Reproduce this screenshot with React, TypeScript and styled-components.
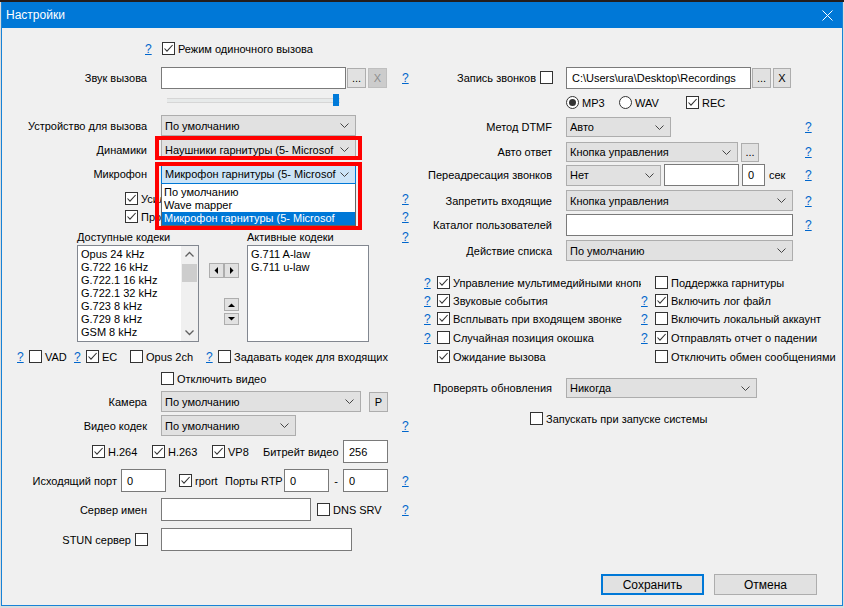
import React from "react";
import styled, { createGlobalStyle } from "styled-components";

const GlobalStyle = createGlobalStyle`
  html, body {
    margin: 0;
    padding: 0;
  }
  body {
    background: #dcdcdc;
    font-family: "Liberation Sans", Arial, sans-serif;
    font-size: 11px;
    color: #000;
  }
`;

const Screen = styled.div`
  width: 844px;
  height: 608px;
  box-sizing: border-box;
  padding: 2px 0 0 1px;
  background: linear-gradient(#231c1c 0 2px, #dcdcdc 2px);
  overflow: hidden;
`;

const Window = styled.div`
  width: 842px;
  height: 604px;
  box-sizing: border-box;
  border: 1px solid #1883d7;
  border-top: none;
  background: #f0f0f0;
  display: flex;
  flex-direction: column;
`;

const TitleBar = styled.div`
  height: 26px;
  flex-shrink: 0;
  background: #0078d7;
  display: flex;
  align-items: center;
  padding: 0 9px 0 4px;
  color: #fff;
  font-size: 12px;
`;

const CloseIcon = styled.svg`
  margin-left: auto;
  width: 11px;
  height: 11px;
`;

const Client = styled.div`
  flex: 1;
  display: flex;
  flex-direction: column;
`;

const Columns = styled.div`
  flex: 1;
  display: flex;
`;

const Row = styled.div<{ $mt: number; $h: number }>`
  display: flex;
  align-items: center;
  flex-shrink: 0;
  position: relative;
  height: ${(p) => p.$h}px;
  margin-top: ${(p) => p.$mt}px;
`;

const Col = styled.div<{ $w: number; $pr: number }>`
  width: ${(p) => p.$w}px;
  display: flex;
  flex-direction: column;

  ${Row} {
    padding-right: ${(p) => p.$pr}px;
  }
`;

const Lbl = styled.span<{ $w: number }>`
  width: ${(p) => p.$w}px;
  flex-shrink: 0;
  display: flex;
  justify-content: flex-end;
  align-items: center;
  gap: 4px;
  white-space: nowrap;
`;

const Cell = styled.span<{ $w?: number; $ml?: number; $center?: boolean; $clip?: boolean }>`
  display: flex;
  align-items: center;
  flex-shrink: 0;
  white-space: nowrap;
  width: ${(p) => (p.$w ? `${p.$w}px` : "auto")};
  margin-left: ${(p) => p.$ml ?? 0}px;
  justify-content: ${(p) => (p.$center ? "center" : "flex-start")};
  overflow: ${(p) => (p.$clip ? "hidden" : "visible")};
`;

const HelpLink = styled.span<{ $auto?: boolean }>`
  color: #0066cc;
  text-decoration: underline;
  font-size: 12px;
  width: 7px;
  cursor: pointer;
  margin-left: ${(p) => (p.$auto ? "auto" : "0")};
`;

const Box = styled.span`
  width: 13px;
  height: 13px;
  box-sizing: border-box;
  flex-shrink: 0;
  border: 1px solid #333;
  background: #fff;
  display: inline-flex;
  align-items: center;
  justify-content: center;
`;

const CheckWrap = styled.span<{ $ml?: number }>`
  display: inline-flex;
  align-items: center;
  gap: 3px;
  white-space: nowrap;
  margin-left: ${(p) => p.$ml ?? 0}px;
`;

const RadioDot = styled.span<{ $on?: boolean }>`
  width: 13px;
  height: 13px;
  box-sizing: border-box;
  border-radius: 50%;
  border: 1px solid #333;
  background: #fff;
  display: inline-flex;
  align-items: center;
  justify-content: center;

  &::after {
    content: "";
    width: 7px;
    height: 7px;
    border-radius: 50%;
    background: ${(p) => (p.$on ? "#333" : "transparent")};
  }
`;

const ComboBox = styled.div<{ $w: number; $h?: number; $focus?: boolean }>`
  width: ${(p) => p.$w}px;
  height: ${(p) => p.$h ?? 21}px;
  flex-shrink: 0;
  box-sizing: border-box;
  border: 1px solid ${(p) => (p.$focus ? "#0078d7" : "#adadad")};
  background: ${(p) => (p.$focus ? "#cce4f7" : "#e1e1e1")};
  display: flex;
  align-items: center;
  padding: 0 6px 0 3px;
  position: relative;
`;

const ComboText = styled.span`
  flex: 1;
  overflow: hidden;
  white-space: nowrap;
`;

const Edit = styled.div<{ $w: number; $h?: number; $ml?: number }>`
  width: ${(p) => p.$w}px;
  height: ${(p) => p.$h ?? 23}px;
  margin-left: ${(p) => p.$ml ?? 0}px;
  flex-shrink: 0;
  box-sizing: border-box;
  border: 1px solid #7a7a7a;
  background: #fff;
  display: flex;
  align-items: center;
  padding-left: 5px;
  white-space: nowrap;
  overflow: hidden;
`;

const Btn = styled.div<{ $w: number; $h?: number; $ml?: number; $disabled?: boolean }>`
  width: ${(p) => p.$w}px;
  height: ${(p) => p.$h ?? 20}px;
  margin-left: ${(p) => p.$ml ?? 0}px;
  flex-shrink: 0;
  box-sizing: border-box;
  border: 1px solid ${(p) => (p.$disabled ? "#bfbfbf" : "#adadad")};
  background: ${(p) => (p.$disabled ? "#cccccc" : "#e1e1e1")};
  color: ${(p) => (p.$disabled ? "#8c8c8c" : "#000")};
  display: flex;
  align-items: center;
  justify-content: center;
`;

const DialogBtn = styled.div<{ $default?: boolean }>`
  width: 103px;
  height: 21px;
  box-sizing: border-box;
  border: ${(p) => (p.$default ? "2px solid #0078d7" : "1px solid #adadad")};
  background: #e1e1e1;
  display: flex;
  align-items: center;
  justify-content: center;
  font-size: 12px;
`;

const Footer = styled.div`
  display: flex;
  justify-content: flex-end;
  gap: 10px;
  padding: 0 25px 10px 0;
`;

const Track = styled.div`
  margin-left: 165px;
  width: 173px;
  height: 12px;
  display: flex;
  align-items: center;
  justify-content: flex-end;
  background: linear-gradient(#f0f0f0 0 4px, #d6d6d6 4px 5px, #e7eaea 5px 8px, #d6d6d6 8px 9px, #f0f0f0 9px);
`;

const Thumb = styled.div`
  width: 6px;
  height: 12px;
  margin-right: 1px;
  background: #007ad9;
`;

const ListBox = styled.div<{ $ml?: number }>`
  width: 122px;
  height: 97px;
  margin-left: ${(p) => p.$ml ?? 0}px;
  flex-shrink: 0;
  box-sizing: border-box;
  border: 1px solid #828790;
  background: #fff;
  display: flex;
  overflow: hidden;
`;

const ListItems = styled.div`
  flex: 1;
  padding: 2px 0 0 3px;
  line-height: 13px;
  white-space: nowrap;
  overflow: hidden;
`;

const ScrollBar = styled.div`
  width: 17px;
  background: #f0f0f0;
  display: flex;
  flex-direction: column;
  align-items: center;
`;

const ScrollArrow = styled.svg`
  width: 17px;
  height: 17px;
  flex-shrink: 0;
`;

const ScrollThumb = styled.div`
  width: 15px;
  height: 18px;
  margin-top: 1px;
  background: #cdcdcd;
`;

const ScrollSpace = styled.div`
  flex: 1;
`;

const Mover = styled.div`
  width: 48px;
  height: 97px;
  flex-shrink: 0;
  display: flex;
  flex-direction: column;
`;

const MoverPair = styled.div<{ $ml: number; $mt: number; $dir: "row" | "column"; $gap: number }>`
  display: flex;
  flex-direction: ${(p) => p.$dir};
  gap: ${(p) => p.$gap}px;
  margin-left: ${(p) => p.$ml}px;
  margin-top: ${(p) => p.$mt}px;
`;

const SmallBtn = styled.div<{ $h: number }>`
  width: 15px;
  height: ${(p) => p.$h}px;
  box-sizing: border-box;
  border: 1px solid #adadad;
  background: #e1e1e1;
  display: flex;
  align-items: center;
  justify-content: center;
`;

const Marked = styled.div`
  position: relative;
  display: flex;
`;

const RedFrame = styled.div<{ $top: number; $h: number }>`
  position: absolute;
  left: -6px;
  top: ${(p) => p.$top}px;
  width: 207px;
  height: ${(p) => p.$h}px;
  box-sizing: border-box;
  border: 4px solid #ff0000;
  pointer-events: none;
  z-index: 3;
`;

const DropList = styled.div`
  position: absolute;
  left: 0;
  top: 20px;
  width: 195px;
  box-sizing: border-box;
  border: 1px solid #646464;
  border-top: none;
  padding-top: 2px;
  background: #fff;
  line-height: 13px;
  z-index: 2;
`;

const DropItem = styled.div<{ $sel?: boolean }>`
  padding-left: 2px;
  white-space: nowrap;
  overflow: hidden;
  background: ${(p) => (p.$sel ? "#0078d7" : "transparent")};
  color: ${(p) => (p.$sel ? "#fff" : "#000")};
`;

const Chevron = () => (
  <svg width="9" height="5" viewBox="0 0 9 5">
    <path d="M0.5 0.5 L4.5 4.5 L8.5 0.5" fill="none" stroke="#444" strokeWidth="1" />
  </svg>
);

const Tick = () => (
  <svg width="11" height="11" viewBox="0 0 11 11">
    <path d="M1.5 5.5 L4 8.2 L9.6 2" fill="none" stroke="#333" strokeWidth="1.1" />
  </svg>
);

const Tri = ({ dir }: { dir: "l" | "r" | "u" | "d" }) => {
  const d = {
    l: "M4 0 L4 7 L0.5 3.5 Z",
    r: "M1 0 L1 7 L4.5 3.5 Z",
    u: "M0 4 L7 4 L3.5 0.5 Z",
    d: "M0 0 L7 0 L3.5 3.5 Z",
  }[dir];
  const horiz = dir === "l" || dir === "r";
  return (
    <svg width={horiz ? 5 : 7} height={horiz ? 7 : 4} viewBox={horiz ? "0 0 5 7" : "0 0 7 4"}>
      <path d={d} fill="#000" />
    </svg>
  );
};

const Help = ({ auto }: { auto?: boolean }) => <HelpLink $auto={auto}>?</HelpLink>;

const Check = ({ label, on, ml }: { label?: string; on?: boolean; ml?: number }) => (
  <CheckWrap $ml={ml}>
    <Box>{on && <Tick />}</Box>
    {label && <span>{label}</span>}
  </CheckWrap>
);

const Radio = ({ label, on }: { label: string; on?: boolean }) => (
  <CheckWrap>
    <RadioDot $on={on} />
    <span>{label}</span>
  </CheckWrap>
);

const Combo = ({ w, h, text, focus, ml }: { w: number; h?: number; text: string; focus?: boolean; ml?: number }) => (
  <ComboBox $w={w} $h={h} $focus={focus} style={ml ? { marginLeft: ml } : undefined}>
    <ComboText>{text}</ComboText>
    <Chevron />
  </ComboBox>
);

const available = [
  "Opus 24 kHz",
  "G.722 16 kHz",
  "G.722.1 16 kHz",
  "G.722.1 32 kHz",
  "G.723 8 kHz",
  "G.729 8 kHz",
  "GSM 8 kHz",
  "iLBC 8 kHz",
];

const options = [
  { l: { t: "Управление мультимедийными кнопками", on: true, h: true }, r: { t: "Поддержка гарнитуры", on: false, h: false } },
  { l: { t: "Звуковые события", on: true, h: true }, r: { t: "Включить лог файл", on: true, h: true } },
  { l: { t: "Всплывать при входящем звонке", on: true, h: true }, r: { t: "Включить локальный аккаунт", on: false, h: true } },
  { l: { t: "Случайная позиция окошка", on: false, h: true }, r: { t: "Отправлять отчет о падении", on: true, h: true } },
  { l: { t: "Ожидание вызова", on: true, h: false }, r: { t: "Отключить обмен сообщениями", on: false, h: false } },
];
const optionGaps = [15, 5, 5, 6, 6];

export default function App() {
  return (
    <Screen>
      <GlobalStyle />
      <Window>
        <TitleBar>
          <span>Настройки</span>
          <CloseIcon viewBox="0 0 11 11">
            <path d="M0.5 0.5 L10.5 10.5 M10.5 0.5 L0.5 10.5" stroke="#fff" strokeWidth="1" />
          </CloseIcon>
        </TitleBar>
        <Client>
          <Columns>
            <Col $w={418} $pr={11}>
              <Row $mt={14} $h={13}>
                <Cell $ml={143} $w={17}>
                  <Help />
                </Cell>
                <Check on label="Режим одиночного вызова" />
              </Row>
              <Row $mt={11} $h={23}>
                <Lbl $w={145}>Звук вызова</Lbl>
                <Edit $w={185} $h={22} $ml={14} />
                <Btn $w={19} $ml={1}>...</Btn>
                <Btn $w={19} $ml={2} $disabled>X</Btn>
                <Help auto />
              </Row>
              <Row $mt={4} $h={14}>
                <Track>
                  <Thumb />
                </Track>
              </Row>
              <Row $mt={8} $h={21}>
                <Lbl $w={145}>Устройство для вызова</Lbl>
                <Combo ml={14} w={195} text="По умолчанию" />
              </Row>
              <Row $mt={3} $h={21}>
                <Lbl $w={145}>Динамики</Lbl>
                <Cell $ml={14}>
                  <Marked>
                    <Combo w={195} text="Наушники гарнитуры (5- Microsof" />
                    <RedFrame $top={-3} $h={24} />
                  </Marked>
                </Cell>
              </Row>
              <Row $mt={4} $h={20}>
                <Lbl $w={145}>Микрофон</Lbl>
                <Cell $ml={14}>
                  <Marked>
                    <Combo w={195} h={20} focus text="Микрофон гарнитуры (5- Microsof" />
                    <DropList>
                      <DropItem>По умолчанию</DropItem>
                      <DropItem>Wave mapper</DropItem>
                      <DropItem $sel>Микрофон гарнитуры (5- Microsof</DropItem>
                    </DropList>
                    <RedFrame $top={-2} $h={68} />
                  </Marked>
                </Cell>
              </Row>
              <Row $mt={8} $h={13}>
                <Check ml={123} on label="Усиление" />
                <Help auto />
              </Row>
              <Row $mt={5} $h={13}>
                <Check ml={123} on label="Проверка" />
                <Help auto />
              </Row>
              <Row $mt={7} $h={14}>
                <Cell $ml={75} $w={170}>Доступные кодеки</Cell>
                <Cell>Активные кодеки</Cell>
                <Help auto />
              </Row>
              <Row $mt={1} $h={97}>
                <ListBox $ml={75}>
                  <ListItems>
                    {available.map((c) => (
                      <div key={c}>{c}</div>
                    ))}
                  </ListItems>
                  <ScrollBar>
                    <ScrollArrow viewBox="0 0 17 17">
                      <path d="M4.5 10.5 L8.5 6.5 L12.5 10.5" fill="none" stroke="#606060" strokeWidth="1.3" />
                    </ScrollArrow>
                    <ScrollThumb />
                    <ScrollSpace />
                    <ScrollArrow viewBox="0 0 17 17">
                      <path d="M4.5 6.5 L8.5 10.5 L12.5 6.5" fill="none" stroke="#606060" strokeWidth="1.3" />
                    </ScrollArrow>
                  </ScrollBar>
                </ListBox>
                <Mover>
                  <MoverPair $ml={10} $mt={18} $dir="row" $gap={0}>
                    <SmallBtn $h={15}>
                      <Tri dir="l" />
                    </SmallBtn>
                    <SmallBtn $h={15}>
                      <Tri dir="r" />
                    </SmallBtn>
                  </MoverPair>
                  <MoverPair $ml={25} $mt={20} $dir="column" $gap={2}>
                    <SmallBtn $h={13}>
                      <Tri dir="u" />
                    </SmallBtn>
                    <SmallBtn $h={12}>
                      <Tri dir="d" />
                    </SmallBtn>
                  </MoverPair>
                </Mover>
                <ListBox>
                  <ListItems>
                    <div>G.711 A-law</div>
                    <div>G.711 u-law</div>
                  </ListItems>
                </ListBox>
              </Row>
              <Row $mt={8} $h={13}>
                <Cell $ml={15} $w={12}>
                  <Help />
                </Cell>
                <Cell $w={45}>
                  <Check label="VAD" />
                </Cell>
                <Cell $w={12}>
                  <Help />
                </Cell>
                <Cell $w={44}>
                  <Check on label="EC" />
                </Cell>
                <Cell $w={76}>
                  <Check label="Opus 2ch" />
                </Cell>
                <Cell $w={12}>
                  <Help />
                </Cell>
                <Check label="Задавать кодек для входящих" />
              </Row>
              <Row $mt={9} $h={13}>
                <Check ml={159} label="Отключить видео" />
              </Row>
              <Row $mt={6} $h={21}>
                <Lbl $w={145}>Камера</Lbl>
                <Combo ml={14} w={200} text="По умолчанию" />
                <Btn $w={19} $ml={8}>P</Btn>
              </Row>
              <Row $mt={3} $h={21}>
                <Lbl $w={145}>Видео кодек</Lbl>
                <Combo ml={14} w={135} text="По умолчанию" />
                <Help auto />
              </Row>
              <Row $mt={4} $h={23}>
                <Cell $ml={90} $w={60}>
                  <Check on label="H.264" />
                </Cell>
                <Cell $w={60}>
                  <Check on label="H.263" />
                </Cell>
                <Cell $w={51}>
                  <Check on label="VP8" />
                </Cell>
                <Cell $w={80}>Битрейт видео</Cell>
                <Edit $w={45}>256</Edit>
              </Row>
              <Row $mt={6} $h={23}>
                <Lbl $w={115}>Исходящий порт</Lbl>
                <Edit $w={45} $ml={4}>0</Edit>
                <Cell $ml={13} $w={46}>
                  <Check on label="rport" />
                </Cell>
                <Cell $w={59}>Порты RTP</Cell>
                <Edit $w={45}>0</Edit>
                <Cell $w={14} $center>
                  -
                </Cell>
                <Edit $w={45}>0</Edit>
                <Help auto />
              </Row>
              <Row $mt={6} $h={23}>
                <Lbl $w={145}>Сервер имен</Lbl>
                <Edit $w={150} $ml={14} />
                <Check ml={6} label="DNS SRV" />
                <Help auto />
              </Row>
              <Row $mt={7} $h={23}>
                <Lbl $w={146}>
                  STUN сервер
                  <Box />
                </Lbl>
                <Edit $w={191} $ml={13} />
              </Row>
            </Col>

            <Col $w={420} $pr={28}>
              <Row $mt={38} $h={23}>
                <Lbl $w={133}>
                  Запись звонков
                  <Box />
                </Lbl>
                <Edit $w={185} $h={22} $ml={13}>
                  C:\Users\ura\Desktop\Recordings
                </Edit>
                <Btn $w={19} $ml={1}>...</Btn>
                <Btn $w={18} $ml={2}>X</Btn>
              </Row>
              <Row $mt={7} $h={13}>
                <Cell $ml={146} $w={53}>
                  <Radio on label="MP3" />
                </Cell>
                <Cell $w={67}>
                  <Radio label="WAV" />
                </Cell>
                <Check on label="REC" />
              </Row>
              <Row $mt={8} $h={20}>
                <Lbl $w={132}>Метод DTMF</Lbl>
                <Combo ml={14} w={105} h={20} text="Авто" />
                <Help auto />
              </Row>
              <Row $mt={5} $h={20}>
                <Lbl $w={132}>Авто ответ</Lbl>
                <Combo ml={14} w={172} h={20} text="Кнопка управления" />
                <Btn $w={18} $h={19} $ml={3}>...</Btn>
                <Help auto />
              </Row>
              <Row $mt={2} $h={22}>
                <Lbl $w={132}>Переадресация звонков</Lbl>
                <Combo ml={14} w={95} text="Нет" />
                <Edit $w={75} $h={22} $ml={3} />
                <Edit $w={23} $h={22} $ml={3}>0</Edit>
                <Cell $ml={4}>сек</Cell>
                <Help auto />
              </Row>
              <Row $mt={4} $h={21}>
                <Lbl $w={132}>Запретить входящие</Lbl>
                <Combo ml={14} w={227} text="Кнопка управления" />
                <Help auto />
              </Row>
              <Row $mt={3} $h={22}>
                <Lbl $w={132}>Каталог пользователей</Lbl>
                <Edit $w={227} $h={22} $ml={14} />
                <Help auto />
              </Row>
              <Row $mt={4} $h={21}>
                <Lbl $w={132}>Действие списка</Lbl>
                <Combo ml={14} w={227} text="По умолчанию" />
              </Row>
              {options.map((o, i) => (
                <Row key={o.l.t} $mt={optionGaps[i]} $h={13}>
                  <Cell $ml={4} $w={13}>
                    {o.l.h && <Help />}
                  </Cell>
                  <Cell $w={204} $clip>
                    <Check on={o.l.on} label={o.l.t} />
                  </Cell>
                  <Cell $w={14}>{o.r.h && <Help />}</Cell>
                  <Check on={o.r.on} label={o.r.t} />
                </Row>
              ))}
              <Row $mt={15} $h={20}>
                <Lbl $w={132}>Проверять обновления</Lbl>
                <Combo ml={14} w={191} h={20} text="Никогда" />
              </Row>
              <Row $mt={14} $h={13}>
                <Check ml={110} label="Запускать при запуске системы" />
              </Row>
            </Col>
          </Columns>
          <Footer>
            <DialogBtn $default>Сохранить</DialogBtn>
            <DialogBtn>Отмена</DialogBtn>
          </Footer>
        </Client>
      </Window>
    </Screen>
  );
}
